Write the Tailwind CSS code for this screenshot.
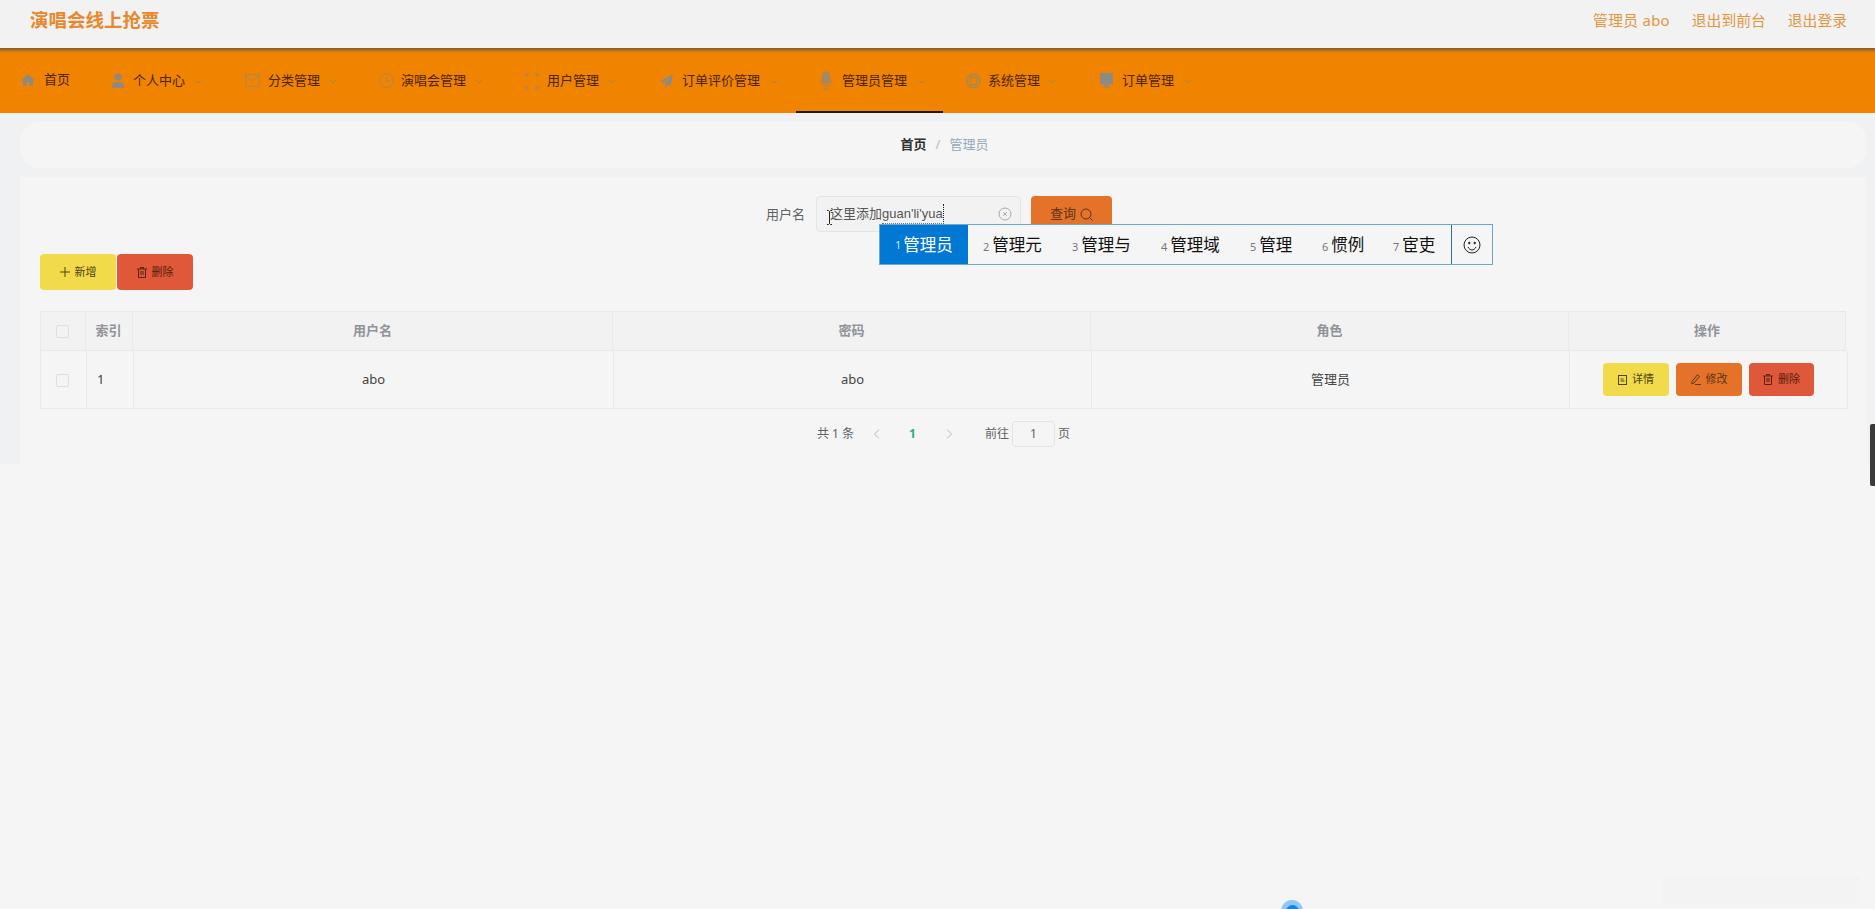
<!DOCTYPE html>
<html lang="zh-CN">
<head>
    <meta charset="UTF-8">
    <title>演唱会线上抢票</title>
    <script src="https://cdn.jsdelivr.net/npm/@tailwindcss/browser@4"></script>
</head>
<body class="relative w-[1875px] h-[909px] overflow-hidden bg-[#f5f5f5] font-['Noto_Sans','Noto_Sans_CJK_SC',sans-serif] text-[#333]">

    <!-- Top bar -->
    <header class="h-[48px] bg-[#f2f2f2] flex items-center justify-between pl-[30px] pr-[28px]">
        <div class="text-[18.5px] font-bold text-[#e8872b] -mt-[8px]">演唱会线上抢票</div>
        <div class="flex items-center gap-[22px] text-[14.8px] text-[#e2963f] -mt-[8px]">
            <span class="tracking-[0.3px]">管理员 abo</span>
            <span>退出到前台</span>
            <span>退出登录</span>
        </div>
    </header>

    <!-- Nav -->
    <nav class="h-[65px] bg-[linear-gradient(#7d5a2a_0,#a86c1c_2px,#e58008_4px,#f08300_6px)] flex text-[13px] text-[#4a2400]">
        <a class="w-[87px] pl-[21px] flex items-center gap-[9px] -mt-[1px]">
            <svg class="w-[14px] h-[14px]" viewBox="0 0 14 14" fill="#8d8a86"><path d="M7 1 0.5 7.200 2 8v5h3.500V9h3v4H12V8l1.500-.8z"/></svg>
            <span>首页</span>
        </a>
        <a class="w-[134px] pl-[24px] flex items-center gap-[8px]">
            <svg class="w-[14px] h-[16px]" viewBox="0 0 14 16" fill="#8d8a86"><circle cx="7" cy="4" r="3.600"/><path d="M1 15c0-4.500 1.500-6 6-6s6 1.500 6 6z"/></svg>
            <span>个人中心</span>
            <svg class="w-[8px] h-[8px] ml-[1px]" viewBox="0 0 8 8" fill="none" stroke="#b2803a"><path d="M.5 2.500 4 6l3.500-3.500"/></svg>
        </a>
        <a class="w-[134px] pl-[24px] flex items-center gap-[8px]">
            <svg class="w-[15px] h-[15px]" viewBox="0 0 15 15" fill="none" stroke="#a98757"><rect x=".7" y="1.500" width="13.600" height="12"/><path d="M1 2.500 7.500 8 14 2.500"/></svg>
            <span>分类管理</span>
            <svg class="w-[8px] h-[8px] ml-[1px]" viewBox="0 0 8 8" fill="none" stroke="#b2803a"><path d="M.5 2.500 4 6l3.500-3.500"/></svg>
        </a>
        <a class="w-[146px] pl-[24px] flex items-center gap-[7px]">
            <svg class="w-[15px] h-[15px]" viewBox="0 0 15 15" fill="none" stroke="#a98757"><circle cx="7.500" cy="7.500" r="6.800"/><path d="M7.500 3.500v4.500h4"/></svg>
            <span>演唱会管理</span>
            <svg class="w-[8px] h-[8px] ml-[2px]" viewBox="0 0 8 8" fill="none" stroke="#b2803a"><path d="M.5 2.500 4 6l3.500-3.500"/></svg>
        </a>
        <a class="w-[135px] pl-[24px] flex items-center gap-[8px]">
            <svg class="w-[14px] h-[16px]" viewBox="0 0 14 16" fill="none" stroke="#a98757" stroke-width="1.300"><path d="M4 1H1v3M10 1h3v3M1 12v3h3M13 12v3h-3"/></svg>
            <span>用户管理</span>
            <svg class="w-[8px] h-[8px] ml-[1px]" viewBox="0 0 8 8" fill="none" stroke="#b2803a"><path d="M.5 2.500 4 6l3.500-3.500"/></svg>
        </a>
        <a class="w-[160px] pl-[24px] flex items-center gap-[9px]">
            <svg class="w-[13px] h-[14px]" viewBox="0 0 13 14" fill="#8d8a86"><path d="M13 0 0 7l3.600 1.800L11 2.500 5 9.500V14l2.600-3.200 2.900 1.300z"/></svg>
            <span>订单评价管理</span>
            <svg class="w-[8px] h-[8px] ml-[1px]" viewBox="0 0 8 8" fill="none" stroke="#b2803a"><path d="M.5 2.500 4 6l3.500-3.500"/></svg>
        </a>
        <a class="w-[147px] pl-[24px] flex items-center gap-[10px] border-b-[2px] border-[#1f1a17] pt-[2px]">
            <svg class="w-[12px] h-[19px]" viewBox="0 0 12 19" fill="none" stroke="#a98757"><rect x="2.500" y=".7" width="7" height="12" rx="3.500" fill="#a3886a"/><path d="M1 7v3c0 3 2 5 5 5s5-2 5-5V7M6 15v3M3 18.300h6"/></svg>
            <span>管理员管理</span>
            <svg class="w-[8px] h-[8px] ml-[1px]" viewBox="0 0 8 8" fill="none" stroke="#b2803a"><path d="M.5 2.500 4 6l3.500-3.500"/></svg>
        </a>
        <a class="w-[133px] pl-[23px] flex items-center gap-[7px]">
            <svg class="w-[15px] h-[16px]" viewBox="0 0 15 16" fill="none" stroke="#a98757" stroke-width="1.400"><circle cx="7.500" cy="8" r="6.800"/><rect x="4" y="4" width="7" height="8" rx="3"/></svg>
            <span>系统管理</span>
            <svg class="w-[8px] h-[8px] ml-[1px]" viewBox="0 0 8 8" fill="none" stroke="#b2803a"><path d="M.5 2.500 4 6l3.500-3.500"/></svg>
        </a>
        <a class="pl-[24px] flex items-center gap-[9px]">
            <svg class="w-[13px] h-[15px]" viewBox="0 0 13 15" fill="#8d8a86"><rect width="13" height="11.500"/><path d="M4.500 11.500h4v2H10v1H3v-1h1.500z"/></svg>
            <span>订单管理</span>
            <svg class="w-[8px] h-[8px] ml-[1px]" viewBox="0 0 8 8" fill="none" stroke="#b2803a"><path d="M.5 2.500 4 6l3.500-3.500"/></svg>
        </a>
    </nav>

    <!-- Main -->
    <main class="h-[351px] bg-[#f0f1f2] pl-[20px] pr-[8px] pt-[9px]">
        <div class="h-[46px] bg-[#f5f5f5] rounded-[20px] flex items-center justify-center text-[13px]">
            <span class="font-bold text-[#303133] ml-[2px]">首页</span>
            <span class="mx-[9px] text-[#b5b9c0]">/</span>
            <span class="text-[#97a8be]">管理员</span>
        </div>

        <section class="mt-[9px] h-[287px] bg-[#f5f5f5] pl-[20px] pr-[19px] pt-[19px]">
            <!-- Search -->
            <div class="h-[36px] flex items-center pl-[726px] text-[13px]">
                <span class="text-[#606266] mt-[1px]">用户名</span>
                <div class="ml-[11px] w-[205px] h-[36px] bg-[#f2f2f2] border border-[#e4e4e4] rounded-[4px] flex items-center justify-between pl-[13px] pr-[8px] text-[#555]">
                    <span class="flex">这里添加<span class="font-['Liberation_Sans'] border-b border-dotted border-[#777] border-r-[#222] border-r">guan'li'yua</span></span>
                    <svg class="w-[14px] h-[14px]" viewBox="0 0 14 14" fill="none" stroke="#a5a8ae"><circle cx="7" cy="7" r="6"/><path d="M5.200 5.200l3.600 3.600M8.800 5.200l-3.600 3.600"/></svg>
                </div>
                <button class="ml-[10px] w-[81px] h-[36px] bg-[#e47329] rounded-[4px] flex items-center justify-center gap-[4px] text-[#5a3517]">
                    查询
                    <svg class="w-[13px] h-[13px]" viewBox="0 0 13 13" fill="none" stroke="#5a3517"><circle cx="6" cy="6" r="5"/><path d="M9.500 9.500l3 3"/></svg>
                </button>
            </div>

            <!-- Actions -->
            <div class="mt-[22px] flex gap-[1px] text-[11px]">
                <button class="w-[76px] h-[36px] bg-[#f2db4b] rounded-[4px] flex items-center justify-center gap-[5px] text-[#4a4212]">
                    <svg class="w-[10px] h-[10px]" viewBox="0 0 10 10" stroke="#4a4212"><path d="M5 0v10M0 5h10"/></svg>
                    新增
                </button>
                <button class="w-[76px] h-[36px] bg-[#e0583a] rounded-[4px] flex items-center justify-center gap-[5px] text-[#57200f]">
                    <svg class="w-[10px] h-[11px]" viewBox="0 0 10 11" fill="none" stroke="#57200f"><path d="M0 2h10M3.500 2V.5h3V2M1.500 2v8.500h7V2M4 4v4M6 4v4"/></svg>
                    删除
                </button>
            </div>

            <!-- Table -->
            <div class="mt-[21px] w-[1808px] text-[13px]">
                <div class="flex h-[40px] w-[1806px] bg-[#f2f2f2] border-t border-b border-l border-r border-[#e8e9eb] font-bold text-[#909399] divide-x divide-[#e8e9eb]">
                    <div class="w-[45px] flex items-center justify-center pr-[1px]"><span class="w-[13px] h-[13px] border border-[#dcdfe6] rounded-[2px]"></span></div>
                    <div class="w-[47px] flex items-center justify-center pr-[1px]">索引</div>
                    <div class="w-[480px] flex items-center justify-center">用户名</div>
                    <div class="w-[478px] flex items-center justify-center">密码</div>
                    <div class="w-[478px] flex items-center justify-center">角色</div>
                    <div class="flex-1 flex items-center justify-center">操作</div>
                </div>
                <div class="flex h-[58px] border-b border-l border-r border-[#e8e9eb] text-[#444] divide-x divide-[#e8e9eb]">
                    <div class="w-[46px] flex items-center justify-center pr-[2px] pt-[1px]"><span class="w-[13px] h-[13px] border border-[#dcdfe6] rounded-[2px]"></span></div>
                    <div class="w-[47px] flex items-center pl-[10px]">1</div>
                    <div class="w-[480px] flex items-center justify-center">abo</div>
                    <div class="w-[478px] flex items-center justify-center">abo</div>
                    <div class="w-[478px] flex items-center justify-center">管理员</div>
                    <div class="flex-1 flex items-center pl-[33px] gap-[7px] text-[11px]">
                        <button class="w-[66px] h-[33px] bg-[#f2db4b] rounded-[4px] flex items-center justify-center gap-[5px] text-[#4a4212]">
                            <svg class="w-[9px] h-[10px]" viewBox="0 0 9 10" fill="none" stroke="#4a4212"><rect x=".5" y=".5" width="8" height="9"/><path d="M2.500 4h3M2.500 6h4" /></svg>
                            详情
                        </button>
                        <button class="w-[66px] h-[33px] bg-[#e47329] rounded-[4px] flex items-center justify-center gap-[5px] text-[#5a3517]">
                            <svg class="w-[10px] h-[11px]" viewBox="0 0 10 11" fill="none" stroke="#5a3517"><path d="M6.500.8 8.500 2.500 3 9 .8 9.800 1 7.500zM4 10.500h6"/></svg>
                            修改
                        </button>
                        <button class="w-[65px] h-[33px] bg-[#e0583a] rounded-[4px] flex items-center justify-center gap-[5px] text-[#57200f]">
                            <svg class="w-[10px] h-[11px]" viewBox="0 0 10 11" fill="none" stroke="#57200f"><path d="M0 2h10M3.500 2V.5h3V2M1.500 2v8.500h7V2M4 4v4M6 4v4"/></svg>
                            删除
                        </button>
                    </div>
                </div>
            </div>

            <!-- Pagination -->
            <div class="mt-[12px] h-[26px] flex items-center pl-[777px] text-[12px] text-[#606266]">
                <span class="w-[56px]">共 1 条</span>
                <svg class="w-[7px] h-[10px]" viewBox="0 0 7 10" fill="none" stroke="#b5b8be"><path d="M6 .5 1.500 5 6 9.500"/></svg>
                <span class="ml-[29px] w-[8px] font-bold text-[#2dab88]">1</span>
                <svg class="ml-[29px] w-[7px] h-[10px]" viewBox="0 0 7 10" fill="none" stroke="#b5b8be"><path d="M1 .5 5.500 5 1 9.500"/></svg>
                <span class="ml-[32px]">前往</span>
                <span class="ml-[3px] w-[43px] h-[26px] border border-[#e4e4e4] rounded-[4px] flex items-center justify-center">1</span>
                <span class="ml-[3px]">页</span>
            </div>
        </section>
    </main>

    <!-- Input method candidate window -->
    <div class="absolute left-[879px] top-[224px] w-[614px] h-[41px] bg-[#f5f5f5] border border-[#6ea7c9] flex items-center text-[16.5px] text-[#111]">
        <div class="w-[88px] h-full bg-[#0078d4] text-white flex items-center pl-[15px] pt-[2px]"><span class="text-[11px] mr-[2px] text-[#cfe5f7]">1</span>管理员</div>
        <div class="w-[89px] pl-[15px] pt-[2px]"><span class="text-[11px] mr-[3px] text-[#777]">2</span>管理元</div>
        <div class="w-[89px] pl-[15px] pt-[2px]"><span class="text-[11px] mr-[3px] text-[#777]">3</span>管理与</div>
        <div class="w-[89px] pl-[15px] pt-[2px]"><span class="text-[11px] mr-[3px] text-[#777]">4</span>管理域</div>
        <div class="w-[72px] pl-[15px] pt-[2px]"><span class="text-[11px] mr-[3px] text-[#777]">5</span>管理</div>
        <div class="w-[71px] pl-[15px] pt-[2px]"><span class="text-[11px] mr-[3px] text-[#777]">6</span>惯例</div>
        <div class="w-[73px] pl-[15px] pt-[2px]"><span class="text-[11px] mr-[3px] text-[#777]">7</span>宦吏</div>
        <div class="flex-1 h-full border-l border-[#2e6f9e] flex items-center justify-center">
            <svg class="w-[18px] h-[18px]" viewBox="0 0 18 18" fill="none" stroke="#222"><circle cx="9" cy="9" r="8"/><circle cx="6.300" cy="7" r=".8" fill="#222"/><circle cx="11.700" cy="7" r=".8" fill="#222"/><path d="M5 11c1 2 2.500 3 4 3s3-1 4-3"/></svg>
        </div>
    </div>

    <!-- Mouse I-beam -->
    <svg class="absolute left-[826px] top-[210px] w-[7px] h-[15px]" viewBox="0 0 7 15" fill="none" stroke="#222"><path d="M1 .5h1.500L3.500 1.500 4.500 .5H6M3.500 1.500v12M1 14.500h1.500l1-1 1 1H6"/></svg>

    <!-- Scrollbar -->
    <div class="absolute right-0 top-[424px] w-[5px] h-[62px] bg-[#3a3a3a] rounded-l-[2px]"></div>

    <!-- Recorder dot at the bottom edge -->
    <div class="absolute left-[1281px] top-[900px] w-[22px] h-[22px] rounded-full bg-[#8cc8fa] flex items-center justify-center"><span class="w-[13px] h-[13px] rounded-full bg-[#0a84f0]"></span></div>
    <div class="absolute left-[1662px] top-[876px] w-[198px] h-[28px] bg-[#f3f3f3]"></div>
</body>
</html>
